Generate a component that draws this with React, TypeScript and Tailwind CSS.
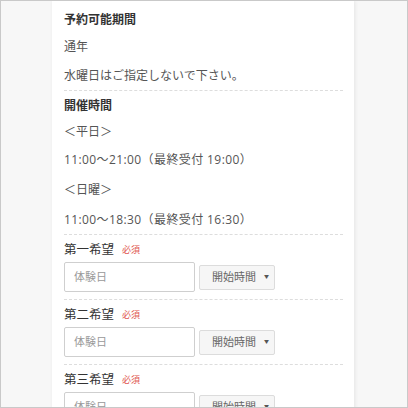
const font = { fontFamily: '"Open Sans", "Noto Sans CJK JP", sans-serif' };

function Choice({ label }: { label: string }) {
  return (
    <div>
      <div className="mt-[5px] flex items-center h-5">
        <span className="text-[12.5px] text-[#333]">{label}</span>
        <span className="ml-[8px] text-[9px] text-[#e0564f]">必須</span>
      </div>
      <div className="mt-[2px] flex items-center gap-[4px]">
        <div className="w-[131px] h-[30px] border border-[#cfcfcf] rounded-[2px] bg-white flex items-center pl-[9px] text-[11px] text-[#999]">
          体験日
        </div>
        <div className="w-[76px] h-[25px] border border-[#dcdcdc] rounded-[2px] bg-[#f6f6f6] flex items-center pl-[12px] pr-[5px] text-[11px] text-[#666]">
          <span className="flex-1">開始時間</span>
          <span className="text-[5px] text-[#555]">▼</span>
        </div>
      </div>
    </div>
  );
}

export default function App() {
  return (
    <div
      className="w-[408px] h-[408px] overflow-hidden border border-[#c9c9c9] bg-[#f7f7f7] flex justify-center"
      style={font}
    >
      <div className="w-[302px] ml-[-2px] bg-white shadow-[1px_0_4px_rgba(0,0,0,0.08)] pl-[12px] pr-[11px] pt-[9px] h-[500px]">
        <p className="h-5 leading-5 text-[12px] font-bold text-[#333]">予約可能期間</p>
        <p className="mt-[7px] h-5 leading-5 text-[12px] text-[#555]">通年</p>
        <p className="mt-[9px] h-5 leading-5 text-[12px] text-[#555]">水曜日はご指定しないで下さい。</p>
        <div className="mt-[4px] border-t border-dashed border-[#dddddd]" />

        <p className="mt-[5px] h-5 leading-5 text-[12px] font-bold text-[#333]">開催時間</p>
        <p className="mt-[6px] h-5 leading-5 text-[12px] text-[#555]">＜平日＞</p>
        <p className="mt-[8px] h-5 leading-5 text-[12px] tracking-[0.4px] text-[#555]">11:00〜21:00（最終受付 19:00）</p>
        <p className="mt-[10px] h-5 leading-5 text-[12px] text-[#555]">＜日曜＞</p>
        <p className="mt-[10px] h-5 leading-5 text-[12px] tracking-[0.4px] text-[#555]">11:00〜18:30（最終受付 16:30）</p>
        <div className="mt-[4px] border-t border-dashed border-[#dddddd]" />

        <Choice label="第一希望" />
        <div className="mt-[7px] border-t border-dashed border-[#dddddd]" />
        <Choice label="第二希望" />
        <div className="mt-[7px] border-t border-dashed border-[#dddddd]" />
        <Choice label="第三希望" />
      </div>
    </div>
  );
}
